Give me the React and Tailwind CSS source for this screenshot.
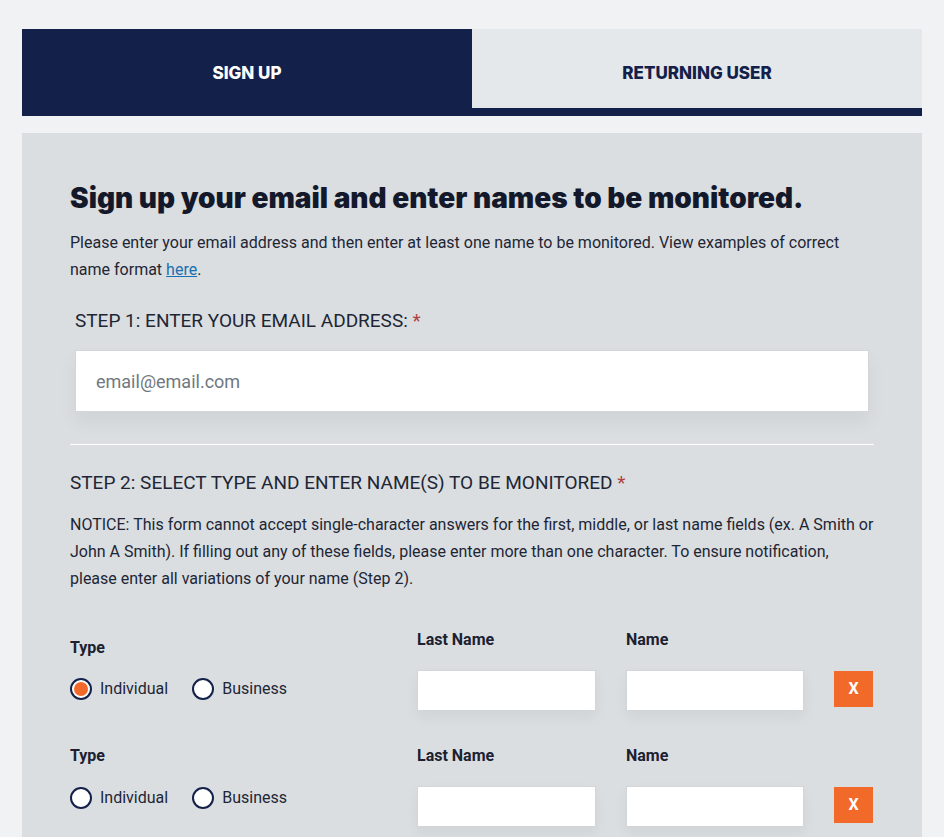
import React from "react";

const heading = { fontFamily: "Inter, 'DejaVu Sans', sans-serif" };

function Radio({ checked, label }) {
  return (
    <label className="flex items-center gap-[8px]">
      <span className="w-[22px] h-[22px] rounded-full border-2 border-[#13214a] bg-white flex items-center justify-center">
        {checked && <span className="w-[14px] h-[14px] rounded-full bg-[#f26a2a]" />}
      </span>
      <span className="text-[16px] text-[#1e2635]">{label}</span>
    </label>
  );
}

function NameRow({ checked, typePt, radioMt }) {
  return (
    <div className="flex items-start h-[116px]">
      <div className="w-[347px]" style={{ paddingTop: typePt }}>
        <div className="text-[16px] font-bold text-[#1b2130] leading-[22px]">Type</div>
        <div className="flex gap-[24px]" style={{ marginTop: radioMt }}>
          <Radio checked={checked} label="Individual" />
          <Radio label="Business" />
        </div>
      </div>
      <div className="w-[209px]">
        <div className="text-[16px] font-bold text-[#1b2130] leading-[22px]">Last Name</div>
        <input className="mt-[19px] w-[179px] h-[41px] bg-white border border-[#d3d6d9] shadow-[0_6px_14px_rgba(0,0,0,0.05)] outline-none" />
      </div>
      <div className="w-[208px]">
        <div className="text-[16px] font-bold text-[#1b2130] leading-[22px]">Name</div>
        <input className="mt-[19px] w-[178px] h-[41px] bg-white border border-[#d3d6d9] shadow-[0_6px_14px_rgba(0,0,0,0.05)] outline-none" />
      </div>
      <button className="mt-[42px] w-[39px] h-[36px] bg-[#f26a2a] text-white font-bold text-[16px] flex items-center justify-center">
        X
      </button>
    </div>
  );
}

export default function App() {
  return (
    <div className="min-h-[837px] bg-[#f0f2f4] pt-[29px] px-[22px] pb-[40px]" style={{ fontFamily: "Roboto, 'Liberation Sans', sans-serif" }}>
      <div className="flex border-b-[8px] border-[#13214a]">
        <div className="w-1/2 h-[79px] pt-[10px] bg-[#13214a] flex items-center justify-center text-white font-extrabold text-[17px]" style={heading}>
          SIGN UP
        </div>
        <div className="w-1/2 h-[79px] pt-[10px] bg-[#e4e8ea] flex items-center justify-center text-[#13214a] font-extrabold text-[17px]" style={heading}>
          RETURNING USER
        </div>
      </div>
      <div className="mt-[17px] bg-[#dadee1] px-[48px] pt-[45px] pb-[10px]">
        <h1 className="text-[28px] leading-[40px] font-black text-[#13192a]" style={heading}>
          Sign up your email and enter names to be monitored.
        </h1>
        <p className="mt-[11px] text-[16px] leading-[27px] text-[#1e2635] pr-[20px]">
          Please enter your email address and then enter at least one name to be monitored. View examples of correct name format{" "}
          <a className="text-[#1a6fb0] underline" href="#">here</a>.
        </p>
        <div className="mt-[26px] ml-[5px] text-[19px] leading-[24px] text-[#1e2635]">
          STEP 1: ENTER YOUR EMAIL ADDRESS: <span className="text-[#b0413e]">*</span>
        </div>
        <div className="mt-[17px] px-[5px]">
          <input
            className="w-full h-[62px] bg-white border border-[#d3d6d9] px-[20px] text-[18px] placeholder-[#707880] outline-none shadow-[0_10px_18px_rgba(0,0,0,0.05)]"
            placeholder="email@email.com"
          />
        </div>
        <hr className="mt-[32px] border-0 border-t border-white" />
        <div className="mt-[26px] text-[19px] leading-[24px] text-[#1e2635]">
          STEP 2: SELECT TYPE AND ENTER NAME(S) TO BE MONITORED <span className="text-[#b0413e]">*</span>
        </div>
        <p className="mt-[16px] text-[16px] leading-[27px] text-[#1e2635]">
          NOTICE: This form cannot accept single-character answers for the first, middle, or last name fields (ex. A Smith or John A Smith). If filling out any of these fields, please enter more than one character. To ensure notification, please enter all variations of your name (Step 2).
        </p>
        <div className="mt-[37px]">
          <NameRow checked typePt={8} radioMt={18} />
          <NameRow typePt={0} radioMt={19} />
        </div>
      </div>
    </div>
  );
}
